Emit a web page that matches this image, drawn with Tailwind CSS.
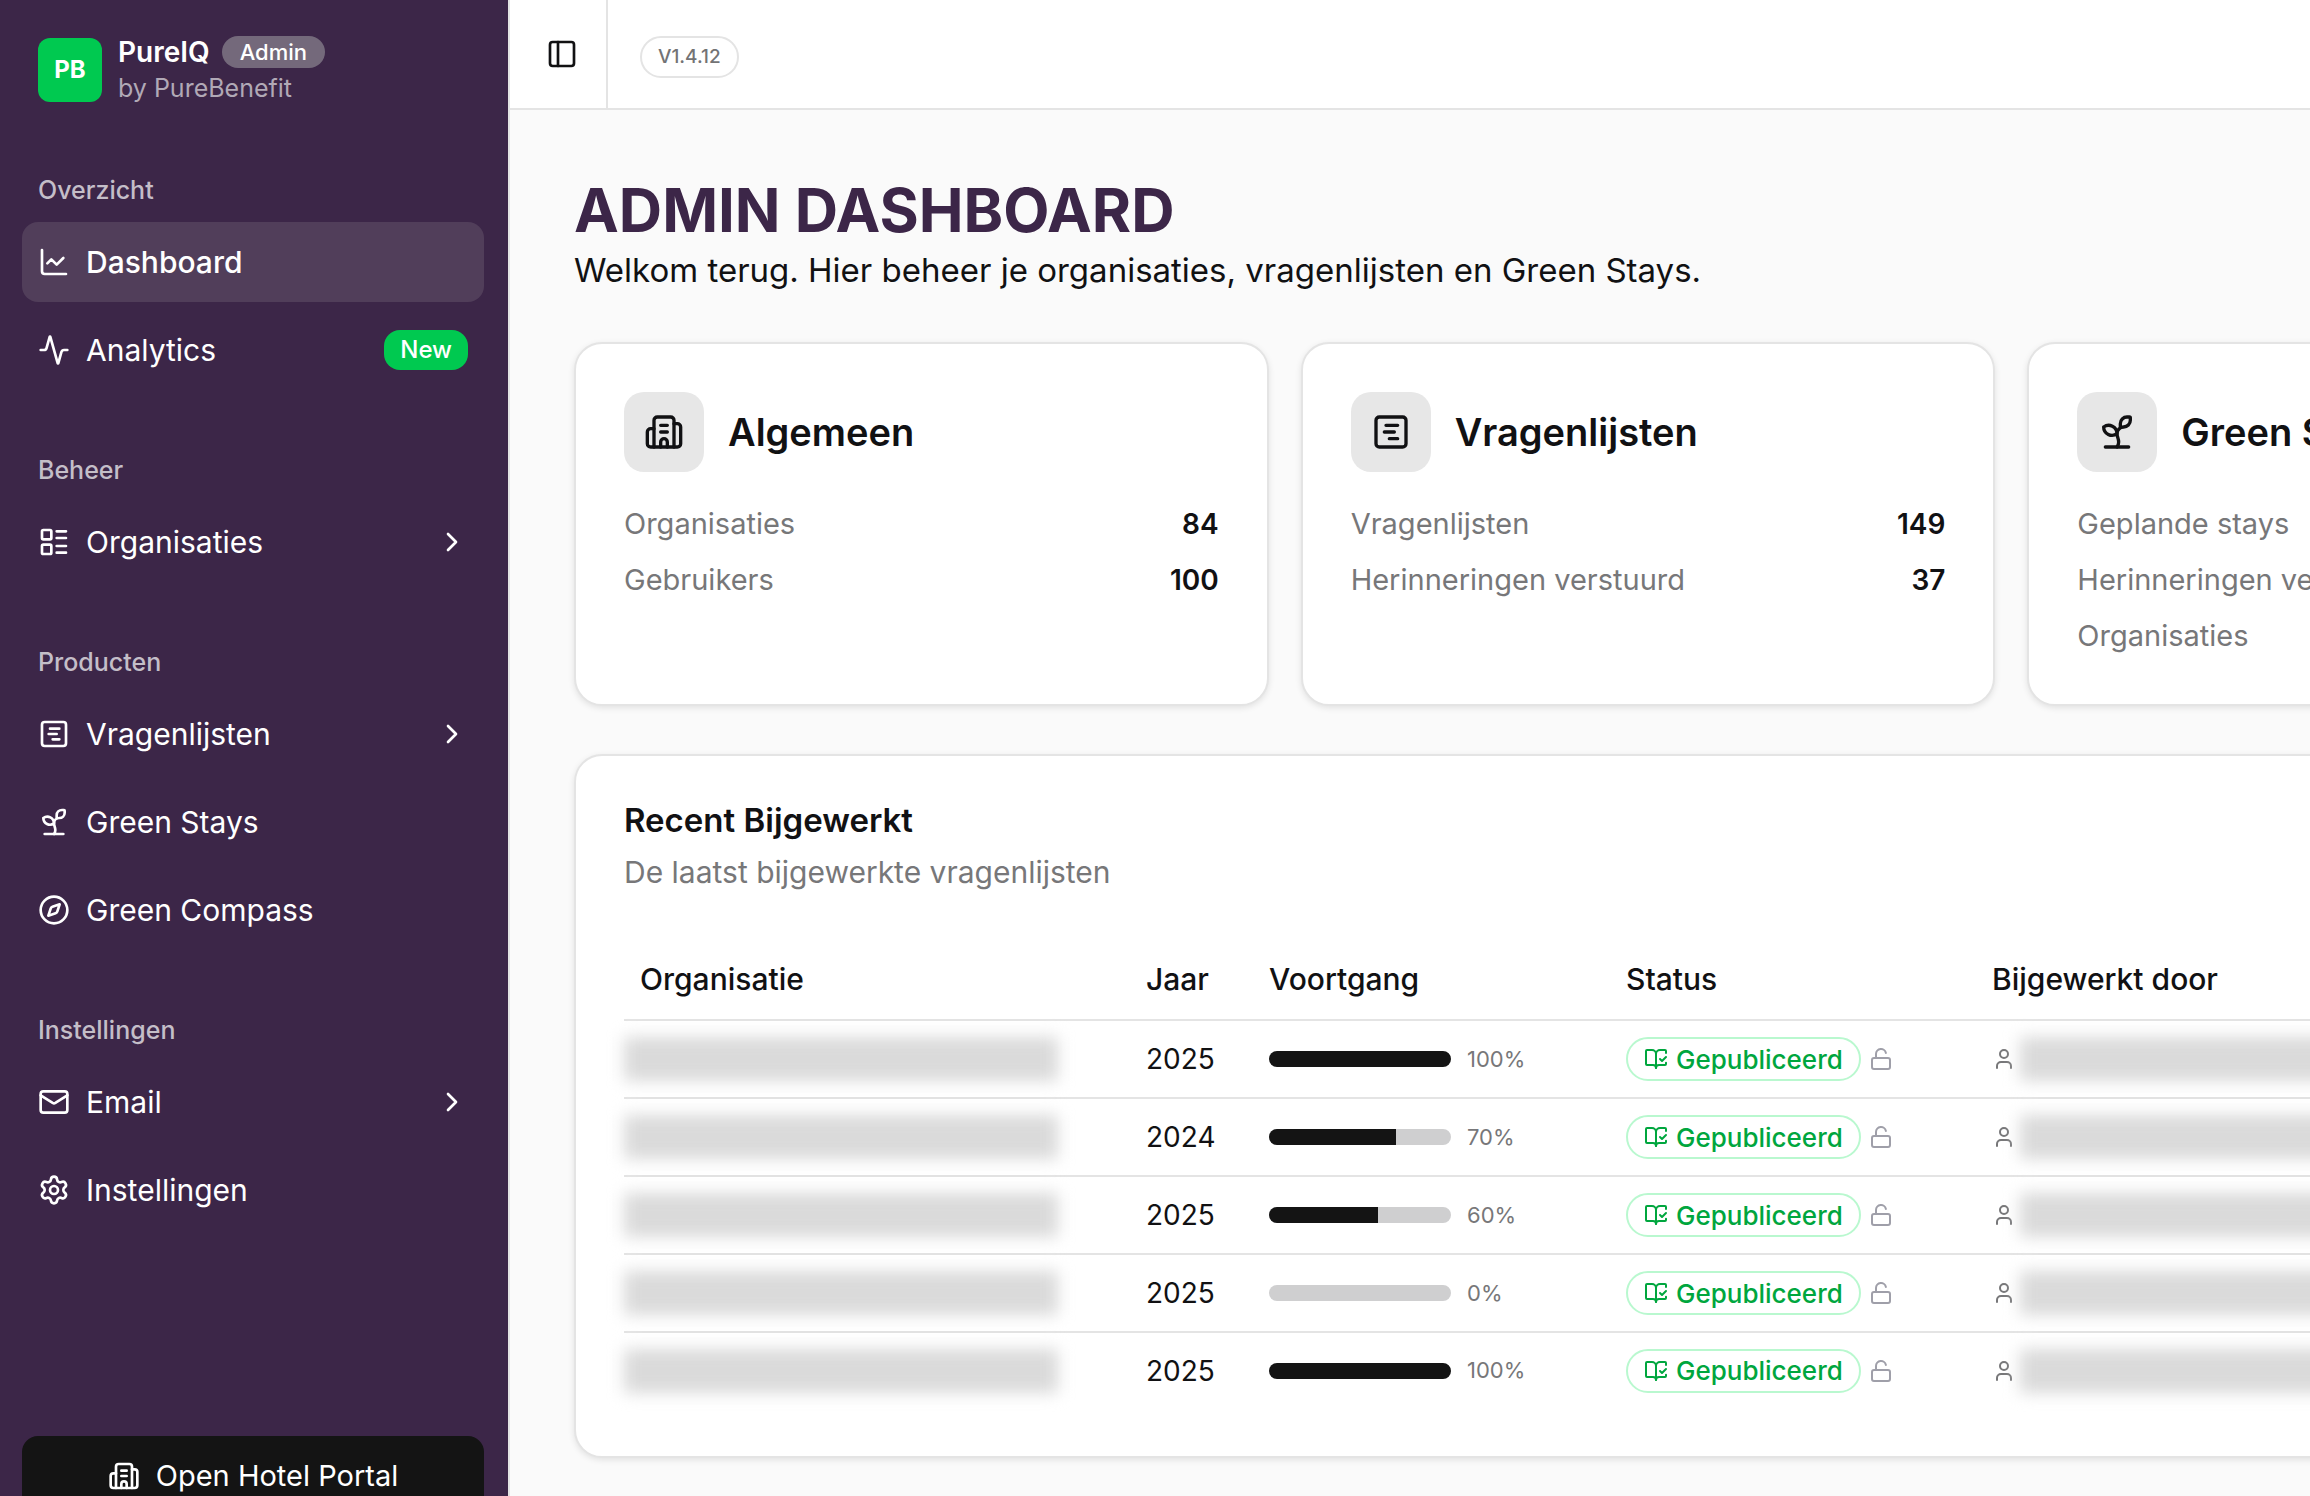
<!DOCTYPE html>
<html lang="nl">
<head>
  <meta charset="UTF-8">
  <meta name="viewport" content="width=device-width, initial-scale=1.0">
  <title>PureIQ - Admin Dashboard</title>
  <script src="https://cdn.jsdelivr.net/npm/@tailwindcss/browser@4"></script>
</head>
<body class="flex h-screen overflow-hidden bg-[#fafafa] font-['Inter',sans-serif] text-[28px] text-[#111113]">

  <!-- Iconen -->
  <svg class="hidden">
    <symbol id="chart" viewBox="0 0 24 24"><path d="M3 3v16a2 2 0 0 0 2 2h16"/><path d="m19 9-5 5-4-4-3 3"/></symbol>
    <symbol id="activity" viewBox="0 0 24 24"><path d="M22 12h-2.48a2 2 0 0 0-1.93 1.46l-2.35 8.36a.25.25 0 0 1-.48 0L9.24 2.18a.25.25 0 0 0-.48 0l-2.35 8.36A2 2 0 0 1 4.49 12H2"/></symbol>
    <symbol id="list" viewBox="0 0 24 24"><rect x="3" y="3" width="7" height="7" rx="1"/><rect x="3" y="14" width="7" height="7" rx="1"/><path d="M14 4h7M14 9h7M14 15h7M14 20h7"/></symbol>
    <symbol id="form" viewBox="0 0 24 24"><rect x="3" y="3" width="18" height="18" rx="2"/><path d="M9 8h7M8 12h6M11 16h5"/></symbol>
    <symbol id="sprout" viewBox="0 0 24 24"><path d="M14 9.536V7a4 4 0 0 1 4-4h1.5a.5.5 0 0 1 .5.5V5a4 4 0 0 1-4 4 4 4 0 0 0-4 4c0 2 1 3 1 5a5 5 0 0 1-1 3"/><path d="M4 9a5 5 0 0 1 8 4 5 5 0 0 1-8-4"/><path d="M5 21h14"/></symbol>
    <symbol id="compass" viewBox="0 0 24 24"><circle cx="12" cy="12" r="10"/><path d="m16.24 7.76-1.804 5.411a2 2 0 0 1-1.265 1.265L7.76 16.24l1.804-5.411a2 2 0 0 1 1.265-1.265z"/></symbol>
    <symbol id="mail" viewBox="0 0 24 24"><rect x="2" y="4" width="20" height="16" rx="2"/><path d="m22 7-8.991 5.727a2 2 0 0 1-2.009 0L2 7"/></symbol>
    <symbol id="settings" viewBox="0 0 24 24"><path d="M9.671 4.136a2.34 2.34 0 0 1 4.659 0 2.34 2.34 0 0 0 3.319 1.915 2.34 2.34 0 0 1 2.33 4.033 2.34 2.34 0 0 0 0 3.831 2.34 2.34 0 0 1-2.33 4.033 2.34 2.34 0 0 0-3.319 1.915 2.34 2.34 0 0 1-4.659 0 2.34 2.34 0 0 0-3.32-1.915 2.34 2.34 0 0 1-2.33-4.033 2.34 2.34 0 0 0 0-3.831A2.34 2.34 0 0 1 6.35 6.051a2.34 2.34 0 0 0 3.319-1.915"/><circle cx="12" cy="12" r="3"/></symbol>
    <symbol id="chevron" viewBox="0 0 24 24"><path d="m9 18 6-6-6-6"/></symbol>
    <symbol id="building" viewBox="0 0 24 24"><path d="M10 12h4M10 8h4M14 21v-3a2 2 0 0 0-4 0v3"/><path d="M6 10H4a2 2 0 0 0-2 2v7a2 2 0 0 0 2 2h16a2 2 0 0 0 2-2V9a2 2 0 0 0-2-2h-2"/><path d="M6 21V5a2 2 0 0 1 2-2h8a2 2 0 0 1 2 2v16"/></symbol>
    <symbol id="panel" viewBox="0 0 24 24"><rect x="3" y="3" width="18" height="18" rx="2"/><path d="M9 3v18"/></symbol>
    <symbol id="book" viewBox="0 0 24 24"><path d="M12 21V7"/><path d="m16 12 2 2 4-4"/><path d="M22 6V4a1 1 0 0 0-1-1h-5a4 4 0 0 0-4 4 4 4 0 0 0-4-4H3a1 1 0 0 0-1 1v13a1 1 0 0 0 1 1h6a3 3 0 0 1 3 3 3 3 0 0 1 3-3h6a1 1 0 0 0 1-1v-1.3"/></symbol>
    <symbol id="unlock" viewBox="0 0 24 24"><rect x="3" y="11" width="18" height="11" rx="2"/><path d="M7 11V7a5 5 0 0 1 9.9-1"/></symbol>
    <symbol id="user" viewBox="0 0 24 24"><path d="M19 21v-2a4 4 0 0 0-4-4H9a4 4 0 0 0-4 4v2"/><circle cx="12" cy="7" r="4"/></symbol>
  </svg>

  <!-- Zijbalk -->
  <aside class="flex w-[510px] shrink-0 flex-col border-r-2 border-[#e4e4e4] bg-[#3c2648] pr-6 pl-[22px] text-white">
    <div class="flex h-[142px] shrink-0 items-start gap-4 px-4 pt-[34px]">
      <div class="mt-1 flex size-16 items-center justify-center rounded-xl bg-[#00c950] text-2xl font-bold">PB</div>
      <div>
        <div class="flex h-9 items-center gap-3">
          <span class="text-[28px] font-semibold">PureIQ</span>
          <span class="flex h-8 items-center rounded-full bg-[#74697b] px-[18px] text-[22px] font-medium">Admin</span>
        </div>
        <div class="h-9 text-[25px] leading-9 text-[#b1a9b6]">by PureBenefit</div>
      </div>
    </div>

    <nav class="mt-4 flex flex-1 flex-col gap-12 text-[30px]">
      <div class="flex flex-col gap-2">
        <h2 class="-mb-2 h-16 px-4 text-[25px] leading-[64px] font-medium text-[#c4bec8]">Overzicht</h2>
        <a href="#" class="flex h-20 items-center gap-4 rounded-2xl bg-[#513e5a] px-4 font-medium">
          <svg class="size-8 fill-none stroke-current stroke-2 [stroke-linecap:round] [stroke-linejoin:round]"><use href="#chart"/></svg>
          <span>Dashboard</span>
        </a>
        <a href="#" class="flex h-20 items-center gap-4 rounded-2xl px-4">
          <svg class="size-8 fill-none stroke-current stroke-2 [stroke-linecap:round] [stroke-linejoin:round]"><use href="#activity"/></svg>
          <span class="flex-1">Analytics</span>
          <span class="flex h-10 items-center rounded-2xl bg-[#00c950] px-4 text-2xl font-medium">New</span>
        </a>
      </div>

      <div class="flex flex-col gap-2">
        <h2 class="-mb-2 h-16 px-4 text-[25px] leading-[64px] font-medium text-[#c4bec8]">Beheer</h2>
        <a href="#" class="flex h-20 items-center gap-4 rounded-2xl px-4">
          <svg class="size-8 fill-none stroke-current stroke-2 [stroke-linecap:round] [stroke-linejoin:round]"><use href="#list"/></svg>
          <span class="flex-1">Organisaties</span>
          <svg class="size-8 fill-none stroke-current stroke-2 [stroke-linecap:round] [stroke-linejoin:round]"><use href="#chevron"/></svg>
        </a>
      </div>

      <div class="flex flex-col gap-2">
        <h2 class="-mb-2 h-16 px-4 text-[25px] leading-[64px] font-medium text-[#c4bec8]">Producten</h2>
        <a href="#" class="flex h-20 items-center gap-4 rounded-2xl px-4">
          <svg class="size-8 fill-none stroke-current stroke-2 [stroke-linecap:round] [stroke-linejoin:round]"><use href="#form"/></svg>
          <span class="flex-1">Vragenlijsten</span>
          <svg class="size-8 fill-none stroke-current stroke-2 [stroke-linecap:round] [stroke-linejoin:round]"><use href="#chevron"/></svg>
        </a>
        <a href="#" class="flex h-20 items-center gap-4 rounded-2xl px-4">
          <svg class="size-8 fill-none stroke-current stroke-2 [stroke-linecap:round] [stroke-linejoin:round]"><use href="#sprout"/></svg>
          <span>Green Stays</span>
        </a>
        <a href="#" class="flex h-20 items-center gap-4 rounded-2xl px-4">
          <svg class="size-8 fill-none stroke-current stroke-2 [stroke-linecap:round] [stroke-linejoin:round]"><use href="#compass"/></svg>
          <span>Green Compass</span>
        </a>
      </div>

      <div class="flex flex-col gap-2">
        <h2 class="-mb-2 h-16 px-4 text-[25px] leading-[64px] font-medium text-[#c4bec8]">Instellingen</h2>
        <a href="#" class="flex h-20 items-center gap-4 rounded-2xl px-4">
          <svg class="size-8 fill-none stroke-current stroke-2 [stroke-linecap:round] [stroke-linejoin:round]"><use href="#mail"/></svg>
          <span class="flex-1">Email</span>
          <svg class="size-8 fill-none stroke-current stroke-2 [stroke-linecap:round] [stroke-linejoin:round]"><use href="#chevron"/></svg>
        </a>
        <a href="#" class="flex h-20 items-center gap-4 rounded-2xl px-4">
          <svg class="size-8 fill-none stroke-current stroke-2 [stroke-linecap:round] [stroke-linejoin:round]"><use href="#settings"/></svg>
          <span>Instellingen</span>
        </a>
      </div>
    </nav>

    <button class="-mb-5 flex h-20 shrink-0 items-center justify-center gap-4 rounded-2xl bg-[#141414] text-[29px]">
      <svg class="size-8 fill-none stroke-current stroke-2 [stroke-linecap:round] [stroke-linejoin:round]"><use href="#building"/></svg>
      Open Hotel Portal
    </button>
  </aside>

  <div class="min-w-0 flex-1 overflow-hidden">
    <header class="flex h-[110px] items-stretch border-b-2 border-[#e4e4e4] bg-white">
      <button aria-label="Zijbalk" class="flex w-[98px] items-center border-r-2 border-[#e4e4e4] pl-9">
        <svg class="size-8 fill-none stroke-current stroke-2 [stroke-linecap:round] [stroke-linejoin:round]"><use href="#panel"/></svg>
      </button>
      <div class="flex items-center pt-1.5 pl-8">
        <span class="flex h-[42px] items-center rounded-full border-2 border-[#e4e4e4] px-4 text-[19px] font-medium text-[#737375]">V1.4.12</span>
      </div>
    </header>

    <main class="min-w-[2276px] p-16">
      <h1 class="text-[60px] leading-[72px] font-bold text-[#3c2648]">ADMIN DASHBOARD</h1>
      <p class="text-[33px] leading-[48px]">Welkom terug. Hier beheer je organisaties, vragenlijsten en Green Stays.</p>

      <div class="mt-12 grid grid-cols-3 gap-8">
        <section class="rounded-[28px] border-2 border-[#e4e4e4] bg-white p-12 shadow-[0_2px_6px_rgba(0,0,0,0.1)]">
          <div class="mb-8 flex items-center gap-6">
            <div class="flex size-20 items-center justify-center rounded-[20px] bg-[#e7e7e7]">
              <svg class="size-10 fill-none stroke-current stroke-2 [stroke-linecap:round] [stroke-linejoin:round]"><use href="#building"/></svg>
            </div>
            <h2 class="text-[38px] font-semibold">Algemeen</h2>
          </div>
          <dl class="flex flex-col gap-4 leading-10">
            <div class="flex justify-between"><dt class="text-[29px] text-[#777779]">Organisaties</dt><dd class="font-semibold">84</dd></div>
            <div class="flex justify-between"><dt class="text-[29px] text-[#777779]">Gebruikers</dt><dd class="font-semibold">100</dd></div>
          </dl>
        </section>

        <section class="rounded-[28px] border-2 border-[#e4e4e4] bg-white p-12 shadow-[0_2px_6px_rgba(0,0,0,0.1)]">
          <div class="mb-8 flex items-center gap-6">
            <div class="flex size-20 items-center justify-center rounded-[20px] bg-[#e7e7e7]">
              <svg class="size-10 fill-none stroke-current stroke-2 [stroke-linecap:round] [stroke-linejoin:round]"><use href="#form"/></svg>
            </div>
            <h2 class="text-[38px] font-semibold">Vragenlijsten</h2>
          </div>
          <dl class="flex flex-col gap-4 leading-10">
            <div class="flex justify-between"><dt class="text-[29px] text-[#777779]">Vragenlijsten</dt><dd class="font-semibold">149</dd></div>
            <div class="flex justify-between"><dt class="text-[29px] text-[#777779]">Herinneringen verstuurd</dt><dd class="font-semibold">37</dd></div>
          </dl>
        </section>

        <section class="rounded-[28px] border-2 border-[#e4e4e4] bg-white p-12 shadow-[0_2px_6px_rgba(0,0,0,0.1)]">
          <div class="mb-8 flex items-center gap-6">
            <div class="flex size-20 items-center justify-center rounded-[20px] bg-[#e7e7e7]">
              <svg class="size-10 fill-none stroke-current stroke-2 [stroke-linecap:round] [stroke-linejoin:round]"><use href="#sprout"/></svg>
            </div>
            <h2 class="text-[38px] font-semibold">Green Stays</h2>
          </div>
          <ul class="flex flex-col gap-4 text-[29px] leading-10 text-[#777779]">
            <li>Geplande stays</li>
            <li>Herinneringen verstuurd</li>
            <li>Organisaties</li>
          </ul>
        </section>
      </div>

      <section class="mt-12 rounded-[28px] border-2 border-[#e4e4e4] bg-white p-12 shadow-[0_2px_6px_rgba(0,0,0,0.1)]">
        <h2 class="text-[33px] leading-8 font-semibold">Recent Bijgewerkt</h2>
        <p class="mt-4 text-[30px] leading-10 text-[#777779]">De laatst bijgewerkte vragenlijsten</p>
        <table class="mt-12 w-full table-fixed border-collapse text-left">
          <thead>
            <tr class="h-20 border-b-2 border-[#e4e4e4] text-[30px]">
              <th class="w-[506px] px-4 font-medium">Organisatie</th>
              <th class="w-[123px] px-4 font-medium">Jaar</th>
              <th class="w-[357px] px-4 font-medium">Voortgang</th>
              <th class="w-[366px] px-4 font-medium">Status</th>
              <th class="px-4 font-medium">Bijgewerkt door</th>
            </tr>
          </thead>
          <tbody id="rows"></tbody>
        </table>
      </section>
    </main>
  </div>

  <script>
    const items = [
      { year: 2025, progress: 100 },
      { year: 2024, progress: 70 },
      { year: 2025, progress: 60 },
      { year: 2025, progress: 0 },
      { year: 2025, progress: 100 }
    ];

    // Namen worden afgeschermd weergegeven
    document.getElementById('rows').innerHTML = items.map(item => `
      <tr class="h-[78px] border-b-2 border-[#e4e4e4] last:h-[76px] last:border-b-0">
        <td class="pr-[72px]"><div class="h-11 bg-[#dadada] blur-sm"></div></td>
        <td class="px-4">${item.year}</td>
        <td class="px-4">
          <div class="flex items-center gap-4">
            <div class="h-4 w-[182px] overflow-hidden rounded-full bg-[#cfcfd0]">
              <div class="h-full bg-[#141414]" style="width: ${item.progress}%"></div>
            </div>
            <span class="text-[22px] text-[#777779]">${item.progress}%</span>
          </div>
        </td>
        <td class="px-4">
          <div class="flex items-center gap-2">
            <span class="flex h-11 items-center gap-2 rounded-full border-2 border-[#b9f8cf] px-4 text-[26px] font-medium text-[#00a63e]">
              <svg class="size-6 fill-none stroke-current stroke-2 [stroke-linecap:round] [stroke-linejoin:round]"><use href="#book"/></svg>
              Gepubliceerd
            </span>
            <svg class="size-6 fill-none stroke-[#9f9fa9] stroke-2 [stroke-linecap:round] [stroke-linejoin:round]"><use href="#unlock"/></svg>
          </div>
        </td>
        <td class="pl-4">
          <div class="flex items-center gap-1">
            <svg class="size-6 shrink-0 fill-none stroke-[#777779] stroke-2 [stroke-linecap:round] [stroke-linejoin:round]"><use href="#user"/></svg>
            <div class="h-11 flex-1 bg-[#dadada] blur-sm"></div>
          </div>
        </td>
      </tr>`).join('');
  </script>
</body>
</html>
